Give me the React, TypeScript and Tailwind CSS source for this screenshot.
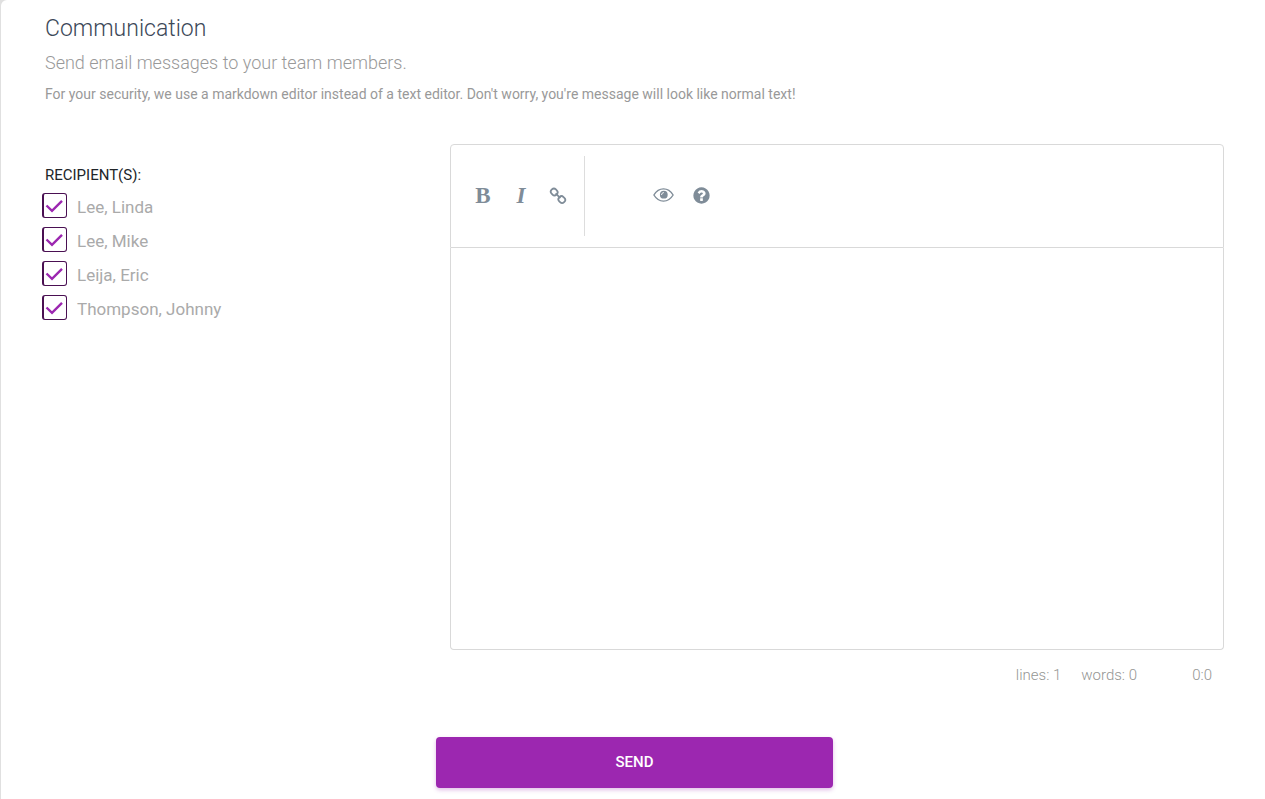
import { useState } from "react";

interface Recipient {
  id: number;
  name: string;
}

const recipients: Recipient[] = [
  { id: 1, name: "Lee, Linda" },
  { id: 2, name: "Lee, Mike" },
  { id: 3, name: "Leija, Eric" },
  { id: 4, name: "Thompson, Johnny" },
];

const toolButton =
  "flex h-8 w-8 items-center justify-center rounded font-['Liberation_Serif',serif] text-[23px] leading-8 font-bold";

function LinkIcon() {
  return (
    <svg viewBox="0 0 18 18" fill="none" stroke="currentColor" strokeWidth="1.8" className="mr-0.5 size-[18px]">
      <rect x="-3.4" y="-3" width="6.8" height="6" rx="2.8" transform="translate(5.2 5) rotate(45)" />
      <rect x="-3.4" y="-3" width="6.8" height="6" rx="2.8" transform="translate(12.8 12.6) rotate(45)" />
      <path d="M6.6 6.4L11.4 11.2" />
    </svg>
  );
}

function EyeIcon() {
  return (
    <svg viewBox="0 0 21 14" className="mb-0.5 h-[14px] w-[21px]">
      <path
        d="M0.9 7C3.2 3.2 6.6 0.9 10.5 0.9S17.8 3.2 20.1 7C17.8 10.8 14.4 13.1 10.5 13.1S3.2 10.8 0.9 7Z"
        fill="none"
        stroke="currentColor"
        strokeWidth="1.4"
      />
      <circle cx="10.8" cy="6.7" r="3.9" fill="currentColor" />
      <path d="M8.6 7C8.6 5.6 9.4 4.7 10.8 4.6" fill="none" stroke="white" strokeWidth="1" />
    </svg>
  );
}

function HelpIcon() {
  return (
    <svg viewBox="0 0 1792 1792" fill="currentColor" className="mb-0.5 size-[19px]">
      <path d="M1024 1376v-192q0-14-9-23t-23-9h-192q-14 0-23 9t-9 23v192q0 14 9 23t23 9h192q14 0 23-9t9-23zm256-672q0-88-55.5-163t-138.5-116-170-41q-243 0-371 213-15 24 8 42l132 100q7 6 19 6 16 0 25-12 53-68 86-92 34-24 86-24 48 0 85.5 26t37.5 59q0 38-20 61t-68 45q-63 28-115.5 86.5t-52.5 125.5v36q0 14 9 23t23 9h192q14 0 23-9t9-23q0-19 21.5-49.5t54.5-49.5q32-18 49-28.5t46-35 44.5-48 28-60.5 12.5-81zm384 192q0 209-103 385.5t-279.5 279.5-385.5 103-385.5-103-279.5-279.5-103-385.5 103-385.5 279.5-279.5 385.5-103 385.5 103 279.5 279.5 103 385.5z" />
    </svg>
  );
}

export default function App() {
  const [selected, setSelected] = useState<number[]>(recipients.map((r) => r.id));
  const [message, setMessage] = useState("");

  const words = message.trim() ? message.trim().split(/\s+/).length : 0;
  const lines = message.split("\n").length;

  const toggle = (id: number) => {
    setSelected(selected.includes(id) ? selected.filter((s) => s !== id) : [...selected, id]);
  };

  return (
    <div className="min-h-screen bg-[#e0e0e0] pl-px font-[Roboto,sans-serif]">
      <form
        onSubmit={(e) => e.preventDefault()}
        className="min-h-screen rounded-tl-md bg-white pt-3 pr-[26px] pb-[11px] pl-8"
      >
        {/* Heading */}
        <header className="px-3">
          <h1 className="text-[23px] leading-[34px] font-light text-[#3c4858]">Communication</h1>
          <h2 className="mt-0.5 text-lg leading-[30px] font-light text-[#999]">
            Send email messages to your team members.
          </h2>
          <p className="mt-[6px] text-sm leading-5 text-[#999]">
            For your security, we use a markdown editor instead of a text editor. Don't worry,
            you're message will look like normal text!
          </p>
        </header>

        <div className="mt-10 grid grid-cols-3">
          {/* Recipients */}
          <fieldset className="px-[9px] pt-5">
            <legend className="float-left w-full pl-[3px] text-[15px] leading-[22px] text-[#212529]">
              RECIPIENT(S):
            </legend>
            <div className="clear-both flex flex-col pt-[5px]">
              {recipients.map((r) => (
                <label key={r.id} className="flex h-[34px] items-center text-[17px] text-[#aaa]">
                  <span className="mr-[10px] mb-[6px] grid">
                    <input
                      type="checkbox"
                      checked={selected.includes(r.id)}
                      onChange={() => toggle(r.id)}
                      className="peer col-start-1 row-start-1 size-[25px] appearance-none rounded-[3px] border border-l-2 border-[#4a1052]"
                    />
                    <svg
                      viewBox="0 0 25 25"
                      fill="none"
                      stroke="#9c27b0"
                      strokeWidth="2.4"
                      className="pointer-events-none invisible col-start-1 row-start-1 size-[25px] peer-checked:visible"
                    >
                      <path d="M4.5 12.5L10 17.8L20 7.8" />
                    </svg>
                  </span>
                  {r.name}
                </label>
              ))}
            </div>
          </fieldset>

          {/* Markdown editor */}
          <div className="col-span-2 px-[15px]">
            <div className="flex h-[104px] items-center rounded-t border border-[#d9d9d9] px-4 text-[#7f8c98]">
              <div className="flex gap-[6px]">
                <button type="button" title="Bold" className={toolButton}>
                  B
                </button>
                <button type="button" title="Italic" className={`${toolButton} italic`}>
                  I
                </button>
                <button type="button" title="Create Link" className={toolButton}>
                  <LinkIcon />
                </button>
              </div>
              <div className="ml-[9px] h-20 w-px bg-[#ddd]" />
              <div className="ml-[62px] flex gap-[6px]">
                <button type="button" title="Toggle Preview" className={toolButton}>
                  <EyeIcon />
                </button>
                <button type="button" title="Markdown Guide" className={toolButton}>
                  <HelpIcon />
                </button>
              </div>
            </div>
            <textarea
              aria-label="Message"
              value={message}
              onChange={(e) => setMessage(e.target.value)}
              className="block h-[402px] w-full resize-none rounded-b border border-t-0 border-[#d9d9d9] p-3 outline-none"
            />
            <div className="flex justify-end pt-[15px] pr-3 text-[15px] leading-5 font-light text-[#959694]">
              <span>lines: {lines}</span>
              <span className="ml-5">words: {words}</span>
              <span className="min-w-[75px] text-right">0:0</span>
            </div>
          </div>
        </div>

        <div className="mt-[52px] grid grid-cols-3">
          <button
            type="submit"
            className="col-start-2 mr-1 ml-px h-[51px] rounded bg-[#9c27b0] text-[15px] font-medium text-white shadow-[0_2px_4px_rgba(156,39,176,0.3)]"
          >
            SEND
          </button>
        </div>
      </form>
    </div>
  );
}
